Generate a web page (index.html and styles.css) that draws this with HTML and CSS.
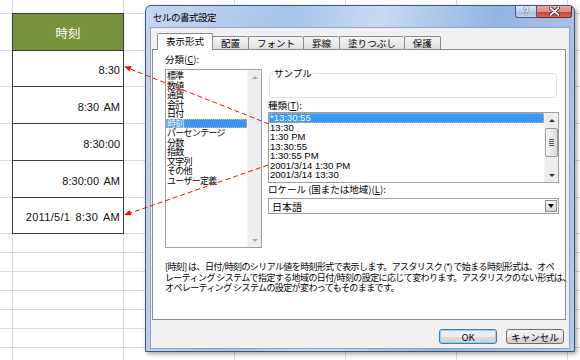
FILE: index.html
```html
<!DOCTYPE html>
<html>
  <head>
    <meta charset="utf-8">
    <title>セルの書式設定</title>
    <link rel="stylesheet" href="styles.css">
  </head>
  <body>
    <div class="sheet">
      <div class="row top"></div>
      <div class="row"><div class="cell head">時刻</div></div>
      <div class="row tight"><div class="cell">8:30</div></div>
      <div class="row"><div class="cell">8:30 AM</div></div>
      <div class="row"><div class="cell">8:30:00</div></div>
      <div class="row"><div class="cell">8:30:00 AM</div></div>
      <div class="row tight"><div class="cell wide">2011/5/1 8:30 AM</div></div>
      <div class="row low"></div>
      <div class="row low"></div>
      <div class="row low"></div>
      <div class="row low"></div>
      <div class="row low"></div>
      <div class="row low"></div>
      <div class="row low"></div>
    </div>

    <div class="dialog">
      <div class="titlebar">
        <span class="title">セルの書式設定</span>
        <div class="caption">
          <span class="cap help">?</span>
          <span class="cap close">
            <svg width="11" height="9" viewBox="0 0 11 9">
              <path d="M1.5 1 L9.5 8 M9.5 1 L1.5 8" stroke="#3a1a14" stroke-width="3.4" stroke-linecap="round"/>
              <path d="M1.5 1 L9.5 8 M9.5 1 L1.5 8" stroke="#fff" stroke-width="1.8" stroke-linecap="round"/>
            </svg>
          </span>
        </div>
      </div>

      <div class="body">
        <div class="tabs">
          <span class="tab active">表示形式</span>
          <span class="tab">配置</span>
          <span class="tab">フォント</span>
          <span class="tab">罫線</span>
          <span class="tab">塗りつぶし</span>
          <span class="tab">保護</span>
        </div>

        <div class="panel">
          <div class="columns">
            <div class="left">
              <div class="label">分類(<u>C</u>):</div>
              <div class="listbox cats">
                <ul class="items">
                  <li>標準</li>
                  <li>数値</li>
                  <li>通貨</li>
                  <li>会計</li>
                  <li>日付</li>
                  <li class="sel">時刻</li>
                  <li>パーセンテージ</li>
                  <li>分数</li>
                  <li>指数</li>
                  <li>文字列</li>
                  <li>その他</li>
                  <li>ユーザー定義</li>
                </ul>
                <div class="vscroll off">
                  <span class="sbtn"><span class="tri up"></span></span>
                  <span class="sbtn"><span class="tri down"></span></span>
                </div>
              </div>
            </div>

            <div class="right">
              <div class="sample"><span>サンプル</span></div>
              <div class="label">種類(<u>T</u>):</div>
              <div class="listbox types">
                <ul class="items">
                  <li class="sel">*13:30:55</li>
                  <li>13:30</li>
                  <li>1:30 PM</li>
                  <li>13:30:55</li>
                  <li>1:30:55 PM</li>
                  <li>2001/3/14 1:30 PM</li>
                  <li>2001/3/14 13:30</li>
                </ul>
                <div class="vscroll">
                  <span class="sbtn"><span class="tri up"></span></span>
                  <span class="thumb"><span class="grip"></span></span>
                  <span class="sbtn"><span class="tri down"></span></span>
                </div>
              </div>
              <div class="label">ロケール (国または地域)(<u>L</u>):</div>
              <div class="combo">
                <span class="value">日本語</span>
                <span class="drop"><span class="tri down"></span></span>
              </div>
            </div>
          </div>

          <p class="desc">
            [時刻] は、日付/時刻のシリアル値を時刻形式で表示します。アスタリスク (*) で始まる時刻形式は、オペ<br>
            レーティング システムで指定する地域の日付/時刻の設定に応じて変わります。アスタリスクのない形式は、<br>
            オペレーティング システムの設定が変わってもそのままです。
          </p>
        </div>

        <div class="buttons">
          <button class="btn default">OK</button>
          <button class="btn">キャンセル</button>
        </div>
      </div>
    </div>

    <svg class="arrows" width="580" height="360" viewBox="0 0 580 360">
      <g stroke="#f01010" stroke-width="1" stroke-dasharray="5 3" fill="none">
        <path d="M269 124 L129 68.5"/>
        <path d="M268 165 L129 213.5"/>
      </g>
      <g fill="#f01010">
        <polygon points="124,66.5 131.5,66 129.6,71.2"/>
        <polygon points="124,215 129.7,209.9 131.5,215.2"/>
      </g>
    </svg>
  </body>
</html>
```

FILE: styles.css
```css
body {
  margin: 0;
  background-color: #fff;
  font-family: "Liberation Sans", Arial, sans-serif;
  overflow: hidden;
}

/* spreadsheet behind the dialog */
.sheet {
  height: 360px;
  background: linear-gradient(to right, #d4d9e3 1px, transparent 1px) 12px 0 / 111px 100% repeat-x;
}

.row {
  display: flex;
  height: 36px;
  border-bottom: 1px solid #d4d9e3;
}

.row.top {
  height: 13px;
}

.row.tight {
  height: 35px;
}

.row.low {
  height: 18px;
}

.cell {
  margin-left: 12px;
  width: 112px;
  height: calc(100% + 1px);
  box-sizing: border-box;
  border: 1px solid #3c3c3c;
  border-top: 0;
  background-color: #fff;
  display: flex;
  align-items: center;
  justify-content: flex-end;
  padding: 3px 3px 0 0;
  font-size: 11px;
  word-spacing: 2px;
  color: #111;
}

.cell.wide {
  letter-spacing: 0.3px;
}

.cell.head {
  margin-top: -1px;
  height: calc(100% + 2px);
  border-top: 1px solid #3c3c3c;
  background-color: #77933c;
  justify-content: center;
  padding: 0;
  color: #fff;
  font-family: "Noto Sans CJK JP", sans-serif;
  font-size: 12.5px;
}

/* dialog window */
.dialog {
  position: absolute;
  left: 145px;
  top: 5px;
  width: 430px;
  height: 347px;
  box-sizing: border-box;
  border: 1px solid #3b5780;
  border-radius: 6px 6px 0 0;
  padding: 0 4px 2px;
  display: flex;
  flex-direction: column;
  background: linear-gradient(100deg, #c3d7f0 0%, #a8c4ea 30%, #c7dbf3 48%, #93b4e2 72%, #b3cced 100%);
  box-shadow: 2px 2px 4px rgba(0, 0, 0, 0.35);
  font-family: "Noto Sans CJK JP", sans-serif;
  color: #000;
}

.titlebar {
  height: 21px;
  display: flex;
  align-items: center;
  padding-left: 3px;
}

.title {
  font-size: 9.5px;
  letter-spacing: -0.5px;
}

.caption {
  margin-left: auto;
  margin-right: -2px;
  align-self: flex-start;
  display: flex;
}

.cap {
  height: 12px;
  display: flex;
  align-items: center;
  justify-content: center;
  border: 1px solid #4a5f80;
  border-top: 0;
  box-sizing: border-box;
}

.help {
  width: 22px;
  border-radius: 0 0 0 3px;
  background: linear-gradient(#dbe7f6 0%, #bfd3ee 50%, #a6c0e6 51%, #bcd3f1 100%);
  font-family: "Liberation Sans", sans-serif;
  font-size: 10px;
  font-weight: bold;
  color: #fff;
  text-shadow: 0 0 1px #2a3a55, 0 0 1px #2a3a55;
}

.close {
  width: 35px;
  border-left: 0;
  border-color: #6a2a22;
  border-radius: 0 0 3px 0;
  background: linear-gradient(#e9aba1 0%, #dd8a7d 50%, #c8402f 51%, #d66a52 100%);
}

.body {
  flex: 1;
  background-color: #f0f0f0;
  border: 1px solid #8ea4c4;
  display: flex;
  flex-direction: column;
  font-size: 9.5px;
}

.tabs {
  display: flex;
  align-items: flex-end;
  height: 16px;
  margin-top: 5px;
  padding-left: 6px;
}

.tab {
  height: 13px;
  box-sizing: border-box;
  padding: 0 8px;
  line-height: 12px;
  border: 1px solid #898c95;
  border-bottom: 0;
  border-right: 0;
  border-radius: 2px 2px 0 0;
  background: linear-gradient(#f6f6f6, #e0e0e0);
}

.tab:last-child {
  border-right: 1px solid #898c95;
}

.tab.active {
  position: relative;
  z-index: 1;
  height: 17px;
  margin-bottom: -1px;
  line-height: 15px;
  border-right: 1px solid #898c95;
  margin-right: -1px;
  background: #fff;
}

.panel {
  height: 271px;
  box-sizing: border-box;
  margin: 0 3px 0 1px;
  padding: 3px 6px 0 12px;
  border: 1px solid #898c95;
  background-color: #fff;
}

.columns {
  display: flex;
}

.left {
  width: 97px;
}

.right {
  flex: 1;
  margin-left: 6px;
}

.label {
  line-height: 12px;
  white-space: nowrap;
}

.left .label {
  margin-bottom: 4px;
}

.listbox {
  display: flex;
  border: 1px solid #9a9ea6;
  background-color: #fff;
}

.listbox.cats {
  height: 179px;
  box-sizing: border-box;
}

.listbox.types {
  height: 71px;
  box-sizing: border-box;
  margin-top: 1px;
}

.items {
  flex: 1;
  list-style: none;
  margin: 0;
  padding: 0;
}

.items li {
  line-height: 9.5px;
  height: 9.5px;
  padding-left: 1px;
  white-space: nowrap;
}

.cats .items {
  padding-top: 1px;
  font-size: 9px;
  letter-spacing: -0.7px;
}

.types .items li {
  font-family: "Liberation Sans", sans-serif;
  font-size: 9.5px;
}

.items li.sel {
  background-color: #3399ff;
  color: #fff;
  outline: 1px dotted #e8b466;
  outline-offset: -1px;
}

.vscroll {
  width: 13px;
  display: flex;
  flex-direction: column;
  justify-content: space-between;
  background-color: #ededed;
  border-left: 1px solid #f7f7f7;
}

.sbtn {
  height: 14px;
  display: flex;
  align-items: center;
  justify-content: center;
}

.tri {
  width: 0;
  height: 0;
  border-left: 3px solid transparent;
  border-right: 3px solid transparent;
}

.tri.up {
  border-bottom: 3px solid #303030;
}

.tri.down {
  border-top: 3px solid #303030;
}

.off .tri.up {
  border-bottom-color: #a8a8a8;
}

.off .tri.down {
  border-top-color: #a8a8a8;
}

.thumb {
  height: 29px;
  margin: 1px 0 auto;
  box-sizing: border-box;
  border: 1px solid #9b9b9b;
  border-radius: 2px;
  background: linear-gradient(to right, #f4f4f4, #dcdcdc);
  display: flex;
  align-items: center;
  justify-content: center;
}

.grip {
  width: 5px;
  height: 7px;
  background: repeating-linear-gradient(#555 0 1px, transparent 1px 2px);
}

.sample {
  height: 23px;
  margin: 20px 2px 0 1px;
  border: 1px solid #dde3e8;
  border-radius: 3px;
}

.sample span {
  display: block;
  width: max-content;
  margin: -7px 0 0 3px;
  padding: 0 1px;
  line-height: 12px;
  background-color: #fff;
}

.sample + .label {
  margin-top: 1px;
}

.combo {
  display: flex;
  align-items: center;
  height: 16px;
  box-sizing: border-box;
  margin-top: 3px;
  border: 1px solid #9a9ea6;
  padding: 1px;
}

.combo .value {
  flex: 1;
  padding-left: 2px;
  font-size: 10px;
}

.drop {
  width: 12px;
  height: 12px;
  box-sizing: border-box;
  border: 1px solid #8a8a8a;
  background: linear-gradient(#f6f6f6, #d8d8d8);
  display: flex;
  align-items: center;
  justify-content: center;
}

.drop .tri {
  border-left-width: 3.5px;
  border-right-width: 3.5px;
  border-top: 4px solid #000;
}

.desc {
  margin: 14px 0 0;
  font-size: 9px;
  line-height: 10.5px;
  letter-spacing: -0.6px;
  white-space: nowrap;
}

.buttons {
  display: flex;
  justify-content: flex-end;
  gap: 9px;
  margin-top: 9px;
  padding-right: 5px;
}

.btn {
  width: 58px;
  height: 15px;
  padding: 0;
  border: 1px solid #707070;
  border-radius: 3px;
  background: linear-gradient(#f2f2f2 0%, #ebebeb 50%, #dddddd 51%, #cfcfcf 100%);
  font-family: "Noto Sans CJK JP", sans-serif;
  font-size: 9.5px;
  line-height: 12px;
  color: #000;
}

.btn.default {
  border-color: #3c7fb1;
  box-shadow: inset 0 0 0 1px #8ed2f4;
}

.arrows {
  position: absolute;
  left: 0;
  top: 0;
  z-index: 5;
  pointer-events: none;
}
```
